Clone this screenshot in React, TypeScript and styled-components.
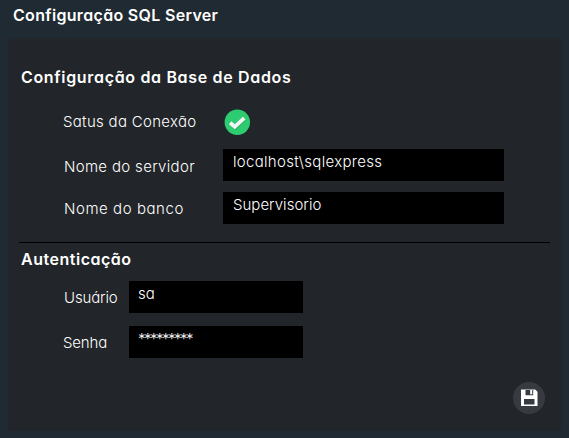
import React from "react";
import styled, { createGlobalStyle } from "styled-components";

const GlobalStyle = createGlobalStyle`
  * { box-sizing: border-box; }
  body {
    margin: 0;
    background: #202a32;
    color: #fff;
    font-family: Inter, "Liberation Sans", sans-serif;
    font-feature-settings: "cv11" 1;
    overflow: hidden;
  }
`;

const Window = styled.main`
  width: 569px;
  height: 438px;
  padding: 5px 7px 7px 8px;
  display: flex;
  flex-direction: column;
  background: #202a32;
`;

const Title = styled.h1<{ $tracking: number }>`
  margin: 0 0 13px 5px;
  font-size: 16px;
  line-height: 20px;
  font-weight: 600;
  letter-spacing: ${(p) => p.$tracking}px;
  white-space: nowrap;
`;

const Panel = styled.section`
  flex: 1;
  display: flex;
  flex-direction: column;
  padding: 29px 11px 17px 10px;
  background: #222529;
`;

const SectionTitle = styled.h2<{ $tracking: number }>`
  margin: 0 0 0 3px;
  font-size: 16px;
  line-height: 20px;
  font-weight: 600;
  letter-spacing: ${(p) => p.$tracking}px;
  white-space: nowrap;
`;

const Fields = styled.div<{ $label: number; $gap: number; $top: number }>`
  display: grid;
  grid-template-columns: ${(p) => p.$label}px max-content;
  row-gap: ${(p) => p.$gap}px;
  margin: ${(p) => p.$top}px 0 0 45px;
`;

const Label = styled.label<{ $tracking: number; $top?: number; $left?: number }>`
  padding: ${(p) => p.$top ?? 7}px 0 0 ${(p) => p.$left ?? 0}px;
  font-size: 15px;
  line-height: 20px;
  font-weight: 300;
  letter-spacing: ${(p) => p.$tracking}px;
  white-space: nowrap;
`;

const Field = styled.div<{ $width: number; $tracking: number }>`
  width: ${(p) => p.$width}px;
  height: 32px;
  padding: 3px 9px;
  background: #000;
  font-size: 15px;
  line-height: 20px;
  font-weight: 300;
  letter-spacing: ${(p) => p.$tracking}px;
  white-space: nowrap;
`;

const WideField = styled(Field)`
  padding-left: 10px;
`;

const StatusCell = styled.div`
  height: 33px;
  padding: 4px 0 0 1px;
  svg { display: block; }
`;

const Divider = styled.hr`
  width: 531px;
  height: 1px;
  margin: 18px 0 6px 1px;
  border: 0;
  background: #000;
`;

const SaveButton = styled.button`
  width: 32px;
  height: 32px;
  margin: auto 6px 0 auto;
  padding: 0;
  border: 0;
  border-radius: 50%;
  background: #373b41;
  svg { display: block; }
`;

const CheckIcon = () => (
  <svg width="27" height="27" viewBox="0 0 27 27">
    <circle cx="13.3" cy="13.3" r="12.7" fill="#2ecc71" />
    <path d="M6.7 14.9 11.2 18.9 20.7 10.2" fill="none" stroke="#29b765" strokeWidth="3.7" />
    <path d="M6.1 13.8 10.7 17.8 20.2 9.1" fill="none" stroke="#f4f6f5" strokeWidth="3.8" />
  </svg>
);

const SaveIcon = () => (
  <svg width="32" height="32" viewBox="0 0 32 32">
    <path
      fill="#fff"
      fillRule="evenodd"
      d="M8 7.5h14.2L24.5 9.8V24H8ZM12.5 8v5.3h7.7V8ZM11 17v5.5h10.5V17Z"
    />
    <path fill="#fff" d="M17.2 8h2v4.3h-2z" />
  </svg>
);

export default function App() {
  return (
    <>
      <GlobalStyle />
      <Window>
        <Title $tracking={0.32}>Configuração SQL Server</Title>
        <Panel>
          <SectionTitle $tracking={0.67}>Configuração da Base de Dados</SectionTitle>
          <Fields $label={160} $gap={11} $top={18}>
            <Label $tracking={0.3}>Satus da Conexão</Label>
            <StatusCell><CheckIcon /></StatusCell>
            <Label $tracking={0.33} $top={8} $left={1}>Nome do servidor</Label>
            <WideField $width={281} $tracking={0.3}>localhost\sqlexpress</WideField>
            <Label $tracking={0.56} $left={1}>Nome do banco</Label>
            <WideField $width={281} $tracking={0.02}>Supervisorio</WideField>
          </Fields>
          <Divider />
          <SectionTitle $tracking={0.52}>Autenticação</SectionTitle>
          <Fields $label={66} $gap={13} $top={12}>
            <Label $tracking={-0.15} $left={1}>Usuário</Label>
            <Field $width={174} $tracking={0}>sa</Field>
            <Label $tracking={-0.15}>Senha</Label>
            <Field $width={174} $tracking={-1.5}>*********</Field>
          </Fields>
          <SaveButton aria-label="Salvar"><SaveIcon /></SaveButton>
        </Panel>
      </Window>
    </>
  );
}
